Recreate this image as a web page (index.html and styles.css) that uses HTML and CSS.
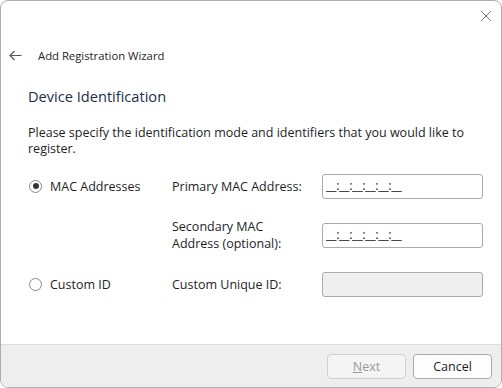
FILE: index.html
```html
<!DOCTYPE html>
<html lang="en">
<head>
    <meta charset="UTF-8">
    <title>Add Registration Wizard</title>
    <link rel="stylesheet" href="styles.css">
</head>
<body>
    <div class="window">
        <div class="title-bar">
            <svg class="close" width="12" height="12" viewBox="0 0 12 12">
                <path d="M1 1 L11 11 M11 1 L1 11" stroke="#777" stroke-width="1" fill="none"/>
            </svg>
        </div>
        <div class="header">
            <svg class="back" width="13" height="11" viewBox="0 0 13 11">
                <path d="M12.5 5.5 H1 M5.5 1 L1 5.5 L5.5 10" stroke="#555" stroke-width="1.2" fill="none"/>
            </svg>
            <span class="wizard-title">Add Registration Wizard</span>
        </div>

        <div class="content">
            <h2>Device Identification</h2>
            <p class="intro">Please specify the identification mode and identifiers that you would like to register.</p>

            <div class="form-grid">
                <label class="radio-option">
                    <span class="radio checked"></span>
                    MAC Addresses
                </label>
                <span class="field-label">Primary MAC Address:</span>
                <div class="text-box">__:__:__:__:__:__</div>

                <span></span>
                <span class="field-label">Secondary MAC<br>Address (optional):</span>
                <div class="text-box">__:__:__:__:__:__</div>

                <label class="radio-option">
                    <span class="radio"></span>
                    Custom ID
                </label>
                <span class="field-label">Custom Unique ID:</span>
                <div class="text-box disabled"></div>
            </div>
        </div>

        <div class="footer">
            <button class="btn" disabled><u>N</u>ext</button>
            <button class="btn">Cancel</button>
        </div>
    </div>
</body>
</html>
```

FILE: styles.css
```css
* {
    box-sizing: border-box;
}
body {
    margin: 0;
    font-family: "Open Sans", "Noto Sans", Arial, sans-serif;
    font-size: 12.5px;
    color: #1e1e1e;
    background: #fff;
}
.window {
    width: 502px;
    height: 388px;
    border: 1px solid #adadad;
    border-radius: 8px;
    overflow: hidden;
    display: flex;
    flex-direction: column;
    background: #fff;
}
.title-bar {
    height: 33px;
    display: flex;
    justify-content: flex-end;
    padding: 9px 9px 0 0;
}
.header {
    height: 42px;
    display: flex;
    align-items: center;
    padding-left: 8px;
}
.back {
    margin-right: 16px;
}
.wizard-title {
    font-size: 11.3px;
}
.content {
    flex: 1;
    padding: 9px 0 0 27px;
}
h2 {
    margin: 0;
    font-size: 14.6px;
    font-weight: normal;
    color: #1c2e4a;
    line-height: 22px;
}
.intro {
    margin: 18px 0 0;
    line-height: 16px;
    width: 450px;
}
.form-grid {
    margin-top: 17px;
    display: grid;
    grid-template-columns: 144px 150px 161px;
    grid-template-rows: 24px 34px 25px;
    row-gap: 20px;
    align-items: center;
}
.radio-option {
    display: flex;
    align-items: center;
    gap: 8px;
    padding-left: 1px;
}
.radio {
    width: 13px;
    height: 13px;
    border: 1px solid #8a8a8a;
    border-radius: 50%;
    background: #fff;
    position: relative;
}
.radio.checked::after {
    content: "";
    position: absolute;
    left: 2.5px;
    top: 2.5px;
    width: 6px;
    height: 6px;
    border-radius: 50%;
    background: #333;
}
.field-label {
    line-height: 17px;
}
.text-box {
    height: 100%;
    border: 1px solid #ababab;
    border-radius: 3px;
    padding: 3px 3px;
    line-height: 16px;
    letter-spacing: -0.4px;
}
.text-box:not(.disabled) {
    height: 25px;
}
.text-box.disabled {
    background: #efefef;
}
.footer {
    height: 43px;
    background: #eeeeee;
    border-top: 1px solid #dcdcdc;
    display: flex;
    justify-content: flex-end;
    align-items: center;
    gap: 7px;
    padding: 0 9px 0 0;
}
.btn {
    width: 79px;
    height: 25px;
    font-family: inherit;
    font-size: 12.5px;
    color: #1e1e1e;
    background: #fdfdfd;
    border: 1px solid #ababab;
    border-radius: 4px;
}
.btn:disabled {
    color: #999;
    background: #f4f4f4;
    border-color: #cfcfcf;
}
```
